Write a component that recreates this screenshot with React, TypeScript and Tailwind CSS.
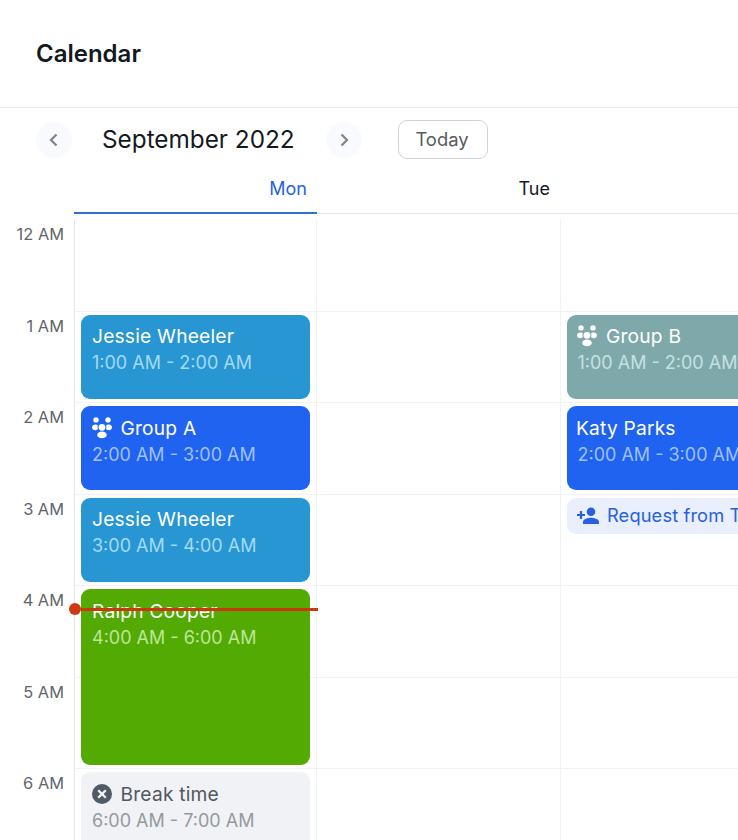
import type { ReactNode } from "react";

const GroupIcon = () => (
  <svg width="20" height="22" viewBox="0 0 20 22" fill="currentColor" className="block shrink-0">
    <circle cx="4" cy="2.9" r="2.7" />
    <circle cx="16" cy="2.9" r="2.7" />
    <path d="M0 10.3C0 8.4 1.500 7.400 3.200 7.400c1.200 0 2.300.4 2.700 1.100a4.500 4.500 0 0 0 0 3.600c-.4.700-1.500 1.100-2.700 1.100C1.500 13.200 0 12.200 0 10.300Z" />
    <path d="M20 10.300c0-1.900-1.500-2.900-3.200-2.900-1.200 0-2.300.4-2.700 1.100a4.500 4.500 0 0 1 0 3.600c.4.700 1.500 1.100 2.700 1.100 1.700 0 3.200-1 3.200-2.900Z" />
    <circle cx="10" cy="10.300" r="3.400" />
    <ellipse cx="10" cy="17.900" rx="4.800" ry="3.400" />
  </svg>
);

const PersonAddIcon = () => (
  <svg width="24" height="18" viewBox="0 0 24 18" fill="currentColor" className="block shrink-0">
    <circle cx="15" cy="4.700" r="4.300" />
    <path d="M7 17v-2.200C7 12 12.300 10.700 15 10.700s8 1.300 8 4.100V17Z" />
    <path d="M3.900 4h2.200v3H9v2.100H6.100v3H3.900v-3H1V7h2.900Z" />
  </svg>
);

const BreakIcon = () => (
  <svg width="20" height="20" viewBox="0 0 20 20" className="block shrink-0">
    <circle cx="10" cy="10" r="10" fill="#4f5b66" />
    <path d="m6.200 6.200 7.600 7.600m0-7.600-7.600 7.600" stroke="#f4f6f8" strokeWidth="2.300" />
  </svg>
);

type EventProps = {
  title: string;
  time: string;
  tone: string;
  timeTone: string;
  icon?: ReactNode;
  height?: string;
  pad?: string;
  timePad?: string;
};

const Event = ({ title, time, tone, timeTone, icon, height = "h-[84px]", pad = "pl-[11px]", timePad = "" }: EventProps) => (
  <div className={`relative z-10 w-[229.4px] rounded-[9px] pt-[8.2px] whitespace-nowrap ${pad} ${height} ${tone}`}>
    <div className="flex h-[26px] items-center gap-[8.5px] text-[19.2px] leading-[26px] tracking-[0.2px]">
      {icon}
      <span>{title}</span>
    </div>
    <div className={`h-[26px] text-[18px] leading-[27px] ${timePad} ${timeTone}`}>{time}</div>
  </div>
);

const Cell = ({ children }: { children?: ReactNode }) => (
  <div className="h-[91.5px] border-b border-[#f1f2f3] pt-[3.4px] pl-[6px]">{children}</div>
);

const hours = ["12 AM", "1 AM", "2 AM", "3 AM", "4 AM", "5 AM", "6 AM"];

const ArrowButton = ({ d, label }: { d: string; label: string }) => (
  <button aria-label={label} className="flex h-[36px] w-[36px] items-center justify-center rounded-full bg-[#f9fafd]">
    <svg width="10" height="14" viewBox="0 0 10 14" fill="none" stroke="#82848e" strokeWidth="2.300">
      <path d={d} />
    </svg>
  </button>
);

export default function App() {
  return (
    <div className="h-[840px] w-[738px] overflow-hidden bg-white font-['Inter',sans-serif] text-[#14181f]">
      <header className="flex h-[108px] items-center border-b border-[#e6e7e9] pl-[36px]">
        <h1 className="text-[24px] font-semibold leading-[30px]">Calendar</h1>
      </header>

      <div className="flex h-[63px] items-center pl-[36px]">
        <ArrowButton label="Previous" d="M7.500 1.500 2 7l5.500 5.500" />
        <h2 className="ml-[30px] w-[224px] pb-[2px] text-[24.3px] leading-[30px]">September 2022</h2>
        <ArrowButton label="Next" d="M2.500 1.500 8 7l-5.500 5.500" />
        <button className="ml-[36px] h-[39px] w-[90px] rounded-[9px] border border-[#cfd3d6] pr-[2px] text-[18.400px] text-[#565c60]">
          Today
        </button>
      </div>

      <div className="ml-[74px] flex h-[43px] text-[18px] leading-[36px]">
        <div className="w-[243px] border-b-2 border-[#2f6fd0] pr-[10px] text-right text-[#2563e0]">Mon</div>
        <div className="w-[243px] border-b border-[#e6e7e9] pr-[10px] text-right">Tue</div>
        <div className="flex-1 border-b border-[#e6e7e9]" />
      </div>

      <div className="flex pt-[6px]">
        <div className="-mt-[1px] w-[74px] shrink-0 pr-[10px] text-right text-[16.4px] leading-[31.6px] text-[#61666b]">
          {hours.map((hour) => (
            <div key={hour} className="h-[91.5px]">{hour}</div>
          ))}
        </div>

        <div className="relative w-[242.4px] shrink-0 border-l border-[#e4e5e7]">
          <Cell />
          <Cell>
            <Event title="Jessie Wheeler" time="1:00 AM - 2:00 AM" tone="bg-[#2796d2] text-white" timeTone="text-[#a3daf7]" />
          </Cell>
          <Cell>
            <Event title="Group A" time="2:00 AM - 3:00 AM" tone="bg-[#2063f0] text-white" timeTone="text-[#9fc0fb]" icon={<GroupIcon />} />
          </Cell>
          <Cell>
            <Event title="Jessie Wheeler" time="3:00 AM - 4:00 AM" tone="bg-[#2796d2] text-white" timeTone="text-[#a3daf7]" />
          </Cell>
          <Cell>
            <Event title="Ralph Cooper" time="4:00 AM - 6:00 AM" tone="bg-[#53aa02] text-white" timeTone="text-[#bce69b]" height="h-[175.5px]" />
          </Cell>
          <Cell />
          <Cell>
            <Event title="Break time" time="6:00 AM - 7:00 AM" tone="bg-[#f0f2f5] text-[#505861]" timeTone="text-[#95999d]" icon={<BreakIcon />} />
          </Cell>
          <div className="absolute -left-[6px] top-[383px] z-20 flex w-[249px] items-center">
            <div className="h-[12px] w-[12px] rounded-full bg-[#cb3a10]" />
            <div className="h-[3px] flex-1 bg-[#c9390d]" />
          </div>
        </div>

        <div className="w-[243.600px] shrink-0 border-l border-[#f1f2f3]">
          {hours.map((hour) => (
            <Cell key={hour} />
          ))}
        </div>

        <div className="w-[243px] shrink-0 border-l border-[#f1f2f3]">
          <Cell />
          <Cell>
            <Event title="Group B" time="1:00 AM - 2:00 AM" tone="bg-[#7fa8aa] text-white" timeTone="text-[#c4e2e3]" icon={<GroupIcon />} pad="pl-[10.500px]" />
          </Cell>
          <Cell>
            <Event title="Katy Parks" time="2:00 AM - 3:00 AM" tone="bg-[#2063f0] text-white" timeTone="text-[#9fc0fb]" pad="pl-[9px]" timePad="pl-[1.500px]" />
          </Cell>
          <Cell>
            <div className="flex h-[36px] w-[230px] items-center gap-[7px] rounded-[9px] bg-[#e9effc] pl-[9px] text-[18.300px] tracking-[0.12px] whitespace-nowrap text-[#2860df]">
              <PersonAddIcon />
              <span>Request from Tom</span>
            </div>
          </Cell>
          <Cell />
          <Cell />
          <Cell />
        </div>
      </div>
    </div>
  );
}
